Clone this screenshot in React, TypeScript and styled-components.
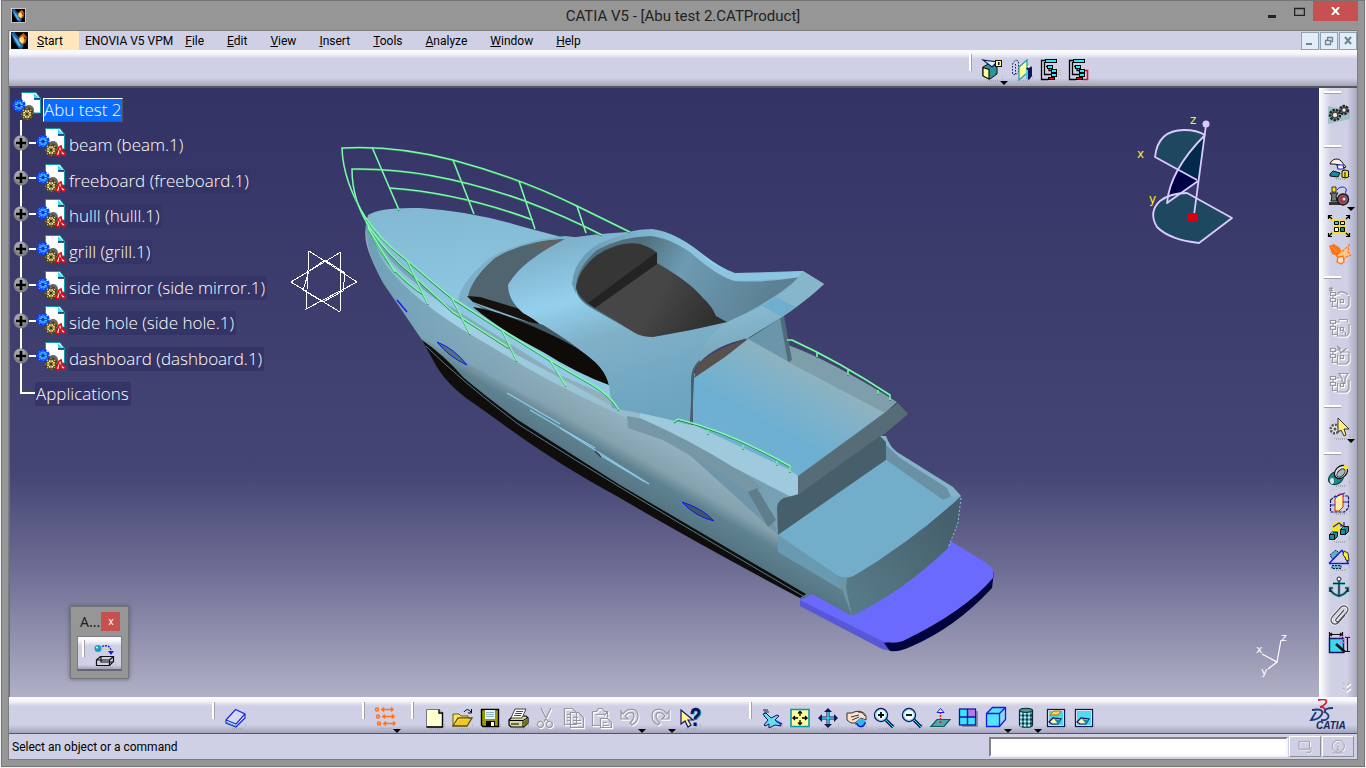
import React from 'react';
import styled, { createGlobalStyle, css } from 'styled-components';

const face = '#cfcfe5';
const frame = '#969696';
const uiFont = '"Noto Sans", sans-serif';
const menuFont = 'Roboto, "Noto Sans", sans-serif';

const GlobalStyle = createGlobalStyle`
  * { box-sizing: border-box; }
  html, body, #root { height: 100%; }
  body { margin: 0; background: #f2f2f4; font-family: ${uiFont}; font-size: 12px; color: #000; }
  button { font: inherit; color: inherit; border: 0; padding: 0; background: none; }
  ul { list-style: none; margin: 0; padding: 0; }
`;

const Window = styled.div`
  display: flex;
  flex-direction: column;
  height: calc(100vh - 1px);
  min-height: 700px;
  margin: 0 1px;
  padding: 0 6px 6px;
  border: 1px solid #757575;
  background: ${frame};
`;

const TitleBar = styled.header`
  display: grid;
  grid-template-columns: 1fr auto 1fr;
  height: 29px;
`;

const TitleIcon = styled.span`
  padding: 7px 0 0 3px;
  line-height: 0;
`;

const Title = styled.h1`
  margin: 0;
  font-family: Roboto, "Noto Sans", sans-serif;
  font-size: 15px;
  font-weight: 400;
  line-height: 30px;
  color: #222;
  white-space: pre;
`;

const Controls = styled.div`
  display: flex;
  justify-content: flex-end;
  align-items: flex-start;
`;

const ControlButton = styled.button<{ $close?: boolean }>`
  width: ${(p) => (p.$close ? 45 : 27)}px;
  height: 20px;
  line-height: 0;
  ${(p) => p.$close && css`background: #c75050;`}
`;

const Body = styled.div`
  flex: 1;
  display: flex;
  flex-direction: column;
  min-height: 0;
  border: 1px solid #7d7d80;
  background: ${face};
`;

const MenuBar = styled.nav`
  display: flex;
  height: 19px;
  padding-left: 1px;
`;

const MenuItem = styled.button<{ $kind?: 'start' | 'tight' }>`
  padding: 2px 12px 0 11px;
  font-family: ${menuFont};
  font-size: 12px;
  line-height: 17px;
  ${(p) => p.$kind === 'start' && css`padding: 2px 16px 0 8px; background: #ffe6bd;`}
  ${(p) => p.$kind === 'tight' && css`padding: 2px 1px 0 6px;`}
`;

const DocControls = styled.div`
  display: flex;
  gap: 1px;
  margin-left: auto;
`;

const DocButton = styled.button`
  width: 18px;
  height: 18px;
  margin-top: 1px;
  border: 1px solid #8fa3b5;
  background: #e2edf8;
  line-height: 0;
`;

const barFace = `linear-gradient(#fdfdff 0, #f4f4fa 4px, ${face} 9px, ${face} 28px, #a3a3b8 100%)`;

const Bar = styled.div<{ $top?: boolean }>`
  display: flex;
  align-items: flex-start;
  height: ${(p) => (p.$top ? 38 : 37)}px;
  padding-top: ${(p) => (p.$top ? 4 : 5)}px;
  border-bottom: ${(p) => (p.$top ? '2px' : '1px')} solid #55555a;
  background: ${barFace};
`;

const Group = styled.div<{ $vertical?: boolean; $before?: number; $after?: string }>`
  display: flex;
  align-items: flex-start;
  flex-direction: ${(p) => (p.$vertical ? 'column' : 'row')};
  ${(p) => p.$before !== undefined && (p.$vertical ? css`margin-top: ${p.$before}px;` : css`margin-left: ${p.$before}px;`)}
  ${(p) => p.$after && css`margin-left: auto; margin-right: ${p.$after};`}
`;

const Handle = styled.span<{ $vertical?: boolean }>`
  flex: none;
  width: ${(p) => (p.$vertical ? 17 : 3)}px;
  height: ${(p) => (p.$vertical ? 3 : 17)}px;
  margin: ${(p) => (p.$vertical ? '0 0 6px 4px' : '0 6px 0 0')};
  background: #fff;
  border: solid #a2a2a6;
  border-width: ${(p) => (p.$vertical ? '0 0 1px 0' : '0 1px 0 0')};
`;

const Tool = styled.button<{ $menu?: boolean; $vertical?: boolean }>`
  position: relative;
  width: 28px;
  height: 28px;
  line-height: 0;
  margin: ${(p) => (p.$vertical ? '0 0 0 5px' : '2px 0 0 0')};
  ${(p) => p.$menu && (p.$vertical ? css`margin-bottom: 2px;` : css`margin-right: 2px;`)}
  &::after {
    content: ${(p) => (p.$menu ? '""' : 'none')};
    position: absolute;
    right: -2px;
    bottom: -1px;
    border: solid transparent;
    border-width: 4px 4px 0;
    border-top-color: #000;
  }
`;

const Middle = styled.div`
  flex: 1;
  display: flex;
  min-height: 0;
`;

const Viewport = styled.main`
  flex: 1;
  display: grid;
  min-width: 0;
  border-left: 1px solid #6e6e72;
  border-right: 1px solid #fff;
  background: linear-gradient(#333366 0%, #3b3b6c 30%, #454575 63%, #6a6a92 78%, #b0b0c6 100%);
  & > * { grid-area: 1 / 1; min-height: 0; }
`;

const Scene = styled.svg`
  width: 100%;
  height: 100%;
  font-family: "DejaVu Sans", sans-serif;
`;

const Overlay = styled.div`
  display: flex;
  flex-direction: column;
  align-items: flex-start;
  justify-content: space-between;
  padding: 4px 0 18px;
  z-index: 1;
`;

const Tree = styled.ul`
  display: grid;
  grid-template-rows: repeat(9, 1fr);
  height: 320px;
  padding-left: 2px;
  background: linear-gradient(#fff, #fff) 10px 28px / 2px 274px no-repeat;
`;

const Node = styled.li`
  display: flex;
  align-items: center;
`;

const Toggle = styled.button`
  width: 16px;
  height: 16px;
  margin: 0 0 5px 1px;
  line-height: 0;
`;

const Stub = styled.span<{ $end?: boolean }>`
  width: ${(p) => (p.$end ? 14 : 7)}px;
  height: 2px;
  margin: ${(p) => (p.$end ? '0 0 3px 9px' : '0 0 5px 0')};
  background: #fff;
`;

const NodeIcon = styled.svg<{ $root?: boolean }>`
  width: 30px;
  height: 29px;
  margin: ${(p) => (p.$root ? '0 1px 6px 0' : '0 2px 5px 0')};
`;

const Label = styled.span<{ $selected?: boolean }>`
  padding: 0 2px 0 1px;
  border-radius: 2px;
  background: #343466;
  color: #fff;
  font-family: "Open Sans", "Noto Sans", sans-serif;
  font-weight: 300;
  font-size: 17px;
  line-height: 24px;
  white-space: pre;
  ${(p) => p.$selected && css`
    padding: 0;
    background: #0a6cff;
    border: 1px solid #fff;
    border-right-color: #555;
    border-bottom-color: #555;
    border-radius: 0;
    line-height: 22px;
  `}
`;

const Palette = styled.section`
  width: 59px;
  height: 73px;
  margin-left: 60px;
  padding: 5px 6px 6px;
  border: 1px solid #747478;
  background: ${frame};
  box-shadow: 0 0 4px rgba(30, 30, 60, 0.5);
`;

const PaletteHead = styled.div`
  display: flex;
  justify-content: space-between;
  height: 24px;
  padding: 0 2px 0 3px;
  font-size: 14px;
  line-height: 20px;
  color: #222;
`;

const PaletteClose = styled.button`
  width: 19px;
  height: 19px;
  background: #c75050;
  line-height: 0;
`;

const PaletteBody = styled.div`
  display: flex;
  height: 35px;
  padding: 3px 0 0 4px;
  border: 1px solid #7d7d80;
  border-bottom: 2px solid #66666c;
  background: ${barFace};
`;

const Side = styled.aside`
  display: flex;
  flex-direction: column;
  width: 37px;
  padding-top: 3px;
  background: linear-gradient(90deg, #fbfbfe 0, ${face} 11px, ${face} 27px, #a9a9bf 100%);
`;

const More = styled.button`
  align-self: flex-end;
  margin: auto 5px 3px 0;
  line-height: 0;
`;

const Brand = styled.svg`
  width: 48px;
  height: 32px;
  margin: -3px 0 0 auto;
  font-family: "Liberation Sans", sans-serif;
  font-weight: 700;
  font-style: italic;
`;

const StatusBar = styled.footer`
  display: flex;
  align-items: center;
  height: 25px;
  padding: 0 3px;
`;

const StatusText = styled.span`
  flex: 1;
  font-family: ${menuFont};
  font-size: 12px;
`;

const Command = styled.input`
  flex: 0 1 299px;
  height: 20px;
  border: 2px solid;
  border-color: #808086 #f4f4fa #f4f4fa #808086;
  background: #fff;
  outline: 0;
`;

const StatusButton = styled.button`
  width: 32px;
  height: 21px;
  margin-left: 1px;
  border: 1px solid;
  border-color: #fff #8e8e98 #8e8e98 #fff;
  line-height: 0;
`;

/* ---------- small drawings ---------- */

const Glyph = ({ children, size = 24 }: { children: React.ReactNode; size?: number }) => (
  <svg width={size} height={size} viewBox="0 0 24 24" fill="none" aria-hidden="true">
    {children}
  </svg>
);

const Shade = () => <path d="M7 22.500h13M9 23.500h10M22.500 18v4" stroke="#a9a9b4" strokeDasharray="1 1" />;

const Etched = ({ d }: { d: string }) => (
  <>
    <path d={d} stroke="#fff" strokeWidth="1.300" transform="translate(1 1)" />
    <path d={d} stroke="#97979f" strokeWidth="1.200" />
  </>
);

const Comet = ({ size }: { size: number }) => (
  <svg width={size} height={size} viewBox="0 0 18 18" aria-hidden="true">
    <rect width="18" height="18" fill="#000" />
    <path d="M1 2l3-1 5 6 4 7-2 3-3-1-4-6z" fill="#1c5ea8" />
    <path d="M2 3l5 5 4 7-3-1-3-5z" fill="#59b7f0" />
    <path d="M9 5l4-3 3 4-1 5-3 2-4-4z" fill="#c95a1c" />
    <path d="M9 7l3-2 2 3-2 4-3-2z" fill="#ffe46b" />
    <circle cx="14" cy="7" r="1" fill="#7a1010" />
    <rect x=".5" y=".5" width="17" height="17" fill="none" stroke="#eee" />
  </svg>
);

const servers = 'M3.5 5.500h5v3h-5zM3.500 11.500h5v3h-5zM6 8.500v3M5.500 14.500v5h5M8.500 7h4M10.500 12v9h9l2.500-3V9M13.500 12.500h3v3h-3z';

const tree = (
  <>
    <path d="M8 2.500H3.500v19H10M6.500 4v12.500H13M8 8.500h3v4h2" stroke="#000" strokeWidth="1.300" />
    <g fill="#2ce8ff" stroke="#000">
      <rect x="7.500" y="1.500" width="11" height="3" /><rect x="9.500" y="7.500" width="5" height="3" />
      <rect x="13.500" y="11.500" width="5" height="3" /><rect x="13.500" y="15.500" width="5" height="3" />
    </g>
    <rect x="10.500" y="19.500" width="6" height="2" fill="#e01010" stroke="#000" />
  </>
);

const icons: Record<string, React.ReactNode> = {
  book: (
    <>
      <path d="M3 14l9.500-10.500L22 8v4l-9 9-10-4z" fill="#f4faff" />
      <path d="M3 14l9.500-10.500L22 8l-9 10z" fill="#d6daf2" />
      <path d="M3 14l9.500-10.500L22 8v4l-9 9-10-4zM3 14l10 4 9-10" stroke="#1b2be0" strokeWidth="1.200" />
      <path d="M4 16.500l9 3.500 8-8" stroke="#2aa0b0" /><Shade />
    </>
  ),
  links: (
    <g stroke="#ff7416" strokeWidth="1.500">
      <circle cx="4" cy="3.500" r="1.500" /><path d="M8 3.500h12M11 1.500l-2 2 2 2M18 1.500l2 2-2 2" />
      <circle cx="5" cy="10.500" r="1.500" /><path d="M9 10.500h12M12 8.500l-2 2 2 2M19 8.500l2 2-2 2" />
      <circle cx="6" cy="17.500" r="1.500" /><path d="M10 17.500h12M13 15.500l-2 2 2 2M20 15.500l2 2-2 2" />
      <path d="M6 22.500h14" stroke="#aaa" strokeDasharray="1 1" />
    </g>
  ),
  page: (
    <>
      <path d="M4.500 3.500H17l3.500 3.500v14h-16z" fill="#ffffd2" stroke="#77777c" />
      <path d="M17 3.500V7h3.500v14h-16" stroke="#000" strokeWidth="1.400" /><Shade />
    </>
  ),
  folder: (
    <>
      <path d="M3 20V8h6l2 2h7v3" fill="#f7e86c" stroke="#6b5c00" />
      <path d="M3 20l5-8h14l-5 8z" fill="#efc72f" stroke="#5d5200" strokeWidth="1.300" />
      <path d="M5 18l4-5h10" stroke="#fff28c" strokeDasharray="1 1" />
      <path d="M14 6c2-3 5-3 7 0M21.500 3v4H18" stroke="#000" /><Shade />
    </>
  ),
  disk: (
    <>
      <path d="M3.500 3.500h17v17H5l-1.500-1.500z" fill="#9a9a00" stroke="#000" strokeWidth="1.400" />
      <rect x="7" y="4" width="10" height="9" fill="#e9f5f8" /><path d="M8 6.500h8M8 8.500h8M8 10.500h8" stroke="#8ab8c8" />
      <rect x="8" y="15" width="9" height="6" fill="#000" /><rect x="13" y="16" width="3" height="4" fill="#fff" /><Shade />
    </>
  ),
  printer: (
    <>
      <path d="M3 14l4-4h13l2 2v5l-4 4H5l-2-2z" fill="#dcd69a" stroke="#000" strokeWidth="1.200" />
      <path d="M9 3h11l-4 9H5z" fill="#fff" stroke="#444" /><path d="M10 5.500h7M9 7.500h7M8 9.500h7" stroke="#1248ff" strokeWidth="1.200" />
      <path d="M3 14.500h14l5-3M17 14.500V21M5 18h8" stroke="#000" /><path d="M18 15l4-3v5l-4 4z" fill="#75701f" /><Shade />
    </>
  ),
  cut: <Etched d="M7 2l7 14M17 2l-7 14M7 15.500a3 3 0 1 0 1 5.500 3 3 0 0 0-1-5.500zM16 15.500a3 3 0 1 0 1 5.500 3 3 0 0 0-1-5.500z" />,
  copy: <Etched d="M2.500 2.500h8l4 4v12h-12zM8.500 6.500h8l5 5v10h-13zM5 8.500h3M5 11.500h3M5 14.500h3M11 11.500h5M11 14.500h8M11 17.500h8" />,
  paste: <Etched d="M2.500 5.500h4l2-3h4l2 3h3v6M2.500 5.500v14h8M6 8.500h8M10.500 12.500h7l4 4v5h-11zM13 16.500h4M13 19.500h6M14 10l3-4 1 5" />,
  undo: <Etched d="M3 5v8h7l-3-3c4-5 9-4 9 0 0 3-2 5-4 7l2 2c4-2 6-5 6-9C20 2 10 1 5 8z" />,
  redo: <Etched d="M21 5v8h-7l3-3c-4-5-9-4-9 0 0 3 2 5 4 7l-2 2c-4-2-6-5-6-9C4 2 14 1 19 8z" />,
  help: (
    <>
      <path d="M3 4v14l4-3 3 6 3-2-3-5h5z" fill="#fff58a" stroke="#14146a" strokeWidth="1.200" />
      <path d="M15 8.500c0-6 7-6 7-1.500 0 4-4.500 3-4 7M18 17v3.500" stroke="#27b7c2" strokeWidth="3" />
      <path d="M14 8c0-6 7-6 7-1.500 0 4-4.500 3-4 7M17 16.500V20" stroke="#14145c" strokeWidth="3" /><Shade />
    </>
  ),
  plane: (
    <>
      <path d="M3 8l3-1 5 5 6-3 2 1-4 4 5 4 1 2-6-1-4 2-2 1v-4L5 20l-1-1 4-5-3-3z" fill="#66dff2" stroke="#14145c" />
      <path d="M3 4h5M4 6h5" stroke="#14145c" /><path d="M16 15l6 3" stroke="#1530e8" strokeWidth="1.500" /><Shade />
    </>
  ),
  fit: (
    <>
      <rect x="3" y="3.500" width="18" height="17" fill="#ffff9c" stroke="#0f98a5" strokeWidth="1.600" />
      <path d="M12 5v5M12 14v5M4.500 12H10M14 12h5.500M10 7.500l2-2 2 2M10 16.500l2 2 2-2M7 10l-2 2 2 2M17 10l2 2-2 2" stroke="#000" strokeWidth="1.300" />
    </>
  ),
  pan: (
    <>
      <path d="M12 2l4 4h-2.500v4.500H18V8l4 4-4 4v-2.500h-4.500V18H16l-4 4-4-4h2.500v-4.500H6V16l-4-4 4-4v2.500h4.500V6H8z" fill="#14145c" />
      <path d="M12 6v12M6 12h12" stroke="#35dcee" strokeWidth="1.600" /><Shade />
    </>
  ),
  rotate: (
    <>
      <path d="M3 7h5c5-3 12-2 14 3v4l-5-2-6 5H7l-4-3z" fill="#ffe0cc" stroke="#333" />
      <path d="M7 11l8-2M8 14l7-3M14 6c4 0 6 2 7 4M11 18h3" stroke="#333" />
      <circle cx="17" cy="17" r="4.500" fill="#2db5f5" /><path d="M12.500 17c2 5 7 5 9-1" stroke="#1518c0" strokeWidth="1.300" /><Shade />
    </>
  ),
  zoomIn: (
    <>
      <path d="M14 14l7 7" stroke="#14145c" strokeWidth="3.200" /><path d="M14 14l7 7" stroke="#2bd0e0" />
      <circle cx="9" cy="9" r="6.500" fill="#f5fdff" stroke="#14145c" strokeWidth="1.400" /><circle cx="9" cy="9" r="5.300" stroke="#5fe0f0" />
      <path d="M9 6v6M6 9h6" stroke="#000" strokeWidth="1.800" /><Shade />
    </>
  ),
  zoomOut: (
    <>
      <path d="M14 14l7 7" stroke="#14145c" strokeWidth="3.200" /><path d="M14 14l7 7" stroke="#2bd0e0" />
      <circle cx="9" cy="9" r="6.500" fill="#f5fdff" stroke="#14145c" strokeWidth="1.400" /><circle cx="9" cy="9" r="5.300" stroke="#5fe0f0" />
      <path d="M6 9h6" stroke="#000" strokeWidth="1.800" /><Shade />
    </>
  ),
  normal: (
    <>
      <path d="M3 20.500l6-7h13l-6 7z" fill="#49a9ae" stroke="#0e5a66" strokeWidth="1.200" />
      <path d="M12.500 17V6" stroke="#d01818" strokeWidth="1.400" strokeDasharray="2 1" /><path d="M9 6.500l3.500-4 3.500 4z" fill="#ffec9c" stroke="#1b1be0" />
      <path d="M4 22.500h12" stroke="#aaa" strokeDasharray="1 1" />
    </>
  ),
  views: (
    <>
      <rect x="6" y="5" width="16" height="16" fill="#8b8ba6" />
      <rect x="3.500" y="3" width="16" height="16" fill="#35e4ff" stroke="#14149a" strokeWidth="1.300" />
      <rect x="12" y="4" width="7" height="7" fill="#b37ae0" /><path d="M11.500 3v16M4 11h16" stroke="#14149a" strokeWidth="1.400" />
    </>
  ),
  cube: (
    <>
      <path d="M2.500 7.500l6-6h13v12l-6 7h-13z" fill="#53e2ff" /><path d="M15.500 7.500l6-6v12l-6 7z" fill="#8cd9f0" />
      <path d="M2.500 7.500l6-6h13v12l-6 7h-13zM2.500 7.500h13v13M15.500 7.500l6-6" stroke="#1a1ae0" strokeWidth="1.300" />
    </>
  ),
  cylinder: (
    <>
      <path d="M5.500 4.500c0-3 13-3 13 0V19c0 3-13 3-13 0z" fill="#3f9ca6" stroke="#14242c" strokeWidth="1.200" />
      <path d="M6 7.500h12M6 11.500h12M6 15.500h12M6 19.500h12" stroke="#c9eef0" strokeDasharray="2 2" strokeWidth="2" />
      <path d="M8 9.500h10M8 13.500h10M8 17.500h10" stroke="#10303a" strokeDasharray="2 2" strokeWidth="2" /><path d="M5.500 4.500c2 2.500 11 2.500 13 0" stroke="#14242c" />
    </>
  ),
  swap: (
    <>
      <rect x="3.500" y="3.500" width="17" height="17" fill="#fff" stroke="#14145c" strokeWidth="1.300" /><rect x="5" y="5" width="14" height="14" fill="#48d8ee" />
      <path d="M6 9l4-4h7l-3 4z" fill="#f7d95c" stroke="#9c7a10" /><path d="M5 16l4-4 8 1-3 5H8z" fill="#fff8b0" stroke="#14145c" strokeWidth="1.200" />
      <path d="M10 13l7 1-3 4z" fill="#1a8ca0" /><Shade />
    </>
  ),
  space: (
    <>
      <rect x="3.500" y="3.500" width="17" height="17" fill="#fff" stroke="#14145c" strokeWidth="1.300" /><rect x="5" y="5" width="14" height="14" fill="#4fdcf2" />
      <path d="M5 16l4-4 8 1-3 5H8z" fill="#fff8b0" stroke="#14145c" strokeWidth="1.200" /><path d="M10 13l7 1-3 4z" fill="#1a8ca0" /><Shade />
    </>
  ),
  cutBox: (
    <>
      <path d="M3 9l5-3 9 2v8l-7 5-7-3z" fill="#2f9298" stroke="#111" /><path d="M3 9.500l6 2V21l-6-3z" fill="#ffff98" stroke="#111" strokeWidth="1.200" />
      <path d="M3 2l14 2-5 5z" fill="#d6f8ff" stroke="#14145c" strokeWidth="1.200" /><rect x="15.500" y="2.500" width="6" height="6" fill="#ffff85" stroke="#111" />
      <rect x="18" y="4" width="1.500" height="3" fill="#111" /><Shade />
    </>
  ),
  mirror: (
    <>
      <path d="M2.500 6l3-4 3 1v11l-3 3-3-1zM5.500 6v10" stroke="#14145c" strokeDasharray="1.500 1.500" />
      <path d="M9 9l8-7v13l-8 7z" fill="#ffff92" stroke="#1f9aa8" strokeWidth="1.200" />
      <path d="M16 11l3-4 3 2v9l-3 4-3-2z" fill="#14145c" /><path d="M16 11l2 1v10l-2-2z" fill="#4ccdea" /><path d="M17 9l2-2 2 1-2 2z" fill="#fff" /><Shade />
    </>
  ),
  structure: <>{tree}<path d="M20.500 12v8M22.500 12v6" stroke="#b4b4be" strokeDasharray="1 1" /></>,
  structureLink: <>{tree}<path d="M19 12.500h2.500v9H17" stroke="#d81020" strokeWidth="1.600" /></>,
  gears: (
    <>
      <path d="M1 4l22 5v8L1 22z" fill="#8fbcc0" opacity=".8" />
      <circle cx="8" cy="13" r="5" fill="#8a8a8a" stroke="#222" strokeWidth="2.500" strokeDasharray="2.400 1" /><circle cx="17" cy="8" r="4" fill="#8a8a8a" stroke="#222" strokeWidth="2.500" strokeDasharray="2.400 1" />
      <circle cx="8" cy="13" r="3" stroke="#333" /><circle cx="8" cy="13" r="2" fill="#eee" /><circle cx="17" cy="8" r="2.500" stroke="#333" /><circle cx="17" cy="8" r="1.500" fill="#eee" />
    </>
  ),
  handMove: (
    <>
      <path d="M3 8c2-6 9-6 11-3l5 6-3 1-3-3-6-1z" fill="#fff2e2" stroke="#111" /><path d="M10 9h6l1 4h-6z" fill="#fff" stroke="#1a1ae0" strokeWidth="1.200" />
      <path d="M3 18l3-3 7 2-2 4-8-1z" fill="#188c96" stroke="#111" /><path d="M15 15l3-1 3.500 1v6l-3.500 1-3-1z" fill="#f5e41a" stroke="#111" /><path d="M18 16v6" stroke="#111" /><Shade />
    </>
  ),
  snap: (
    <>
      <path d="M10 6c3-5 11-3 9 1s3 3 2 6" stroke="#1a1ae0" /><path d="M5 3h4v5H5z" fill="#ffe21c" stroke="#333" />
      <path d="M3 9h8l-2 3 1 5H4l1-5z" fill="#777" stroke="#111" /><path d="M2 18h11v3H2z" fill="#333" />
      <circle cx="16" cy="15.500" r="5.500" fill="#6c6c74" stroke="#111" strokeWidth="1.300" /><circle cx="16" cy="15.500" r="3.500" fill="#a83040" /><circle cx="17" cy="15" r="1.500" fill="#bfeef5" />
    </>
  ),
  explode: (
    <>
      <path d="M2 2l20 20M22 2L2 22" stroke="#f3e11a" strokeWidth="2" /><path d="M1.500 5V1.500H5M19 1.500h3.500V5M1.500 19v3.500H5M19 22.500h3.500V19M2 2l3 3M22 2l-3 3M2 22l3-3M22 22l-3-3" stroke="#000" strokeWidth="1.200" />
      <path d="M6 6h13v13H6z" fill="#f3e11a" />
      <g stroke="#000"><path d="M7.500 7.500h4v3h-4z" fill="#23d7ee" /><path d="M13.500 7.500h4v3h-4z" fill="#fbd9d4" /><path d="M7.500 13.500h4v4h-4z" fill="#fff" /><path d="M13.500 13.500h4v4h-4z" fill="#188c96" /></g>
    </>
  ),
  clash: (
    <>
      <path d="M11 8l5 1 6-6-1 7 3 3-5 2-3 3-4-1-3-4z" fill="#ffc690" stroke="#ff7416" strokeWidth="1.200" strokeDasharray="3 1" />
      <path d="M2 4l5-2 6 4 1 4-4 4-5-2z" fill="#ff7416" /><path d="M11 15l5-1 1 6-3 2-4-2z" fill="#ffe0c0" stroke="#ff7416" strokeWidth="1.300" /><path d="M5 5l5 5" stroke="#ffb070" />
    </>
  ),
  srv1: <Etched d={servers + 'M4 0v5M2 1l4 3M6 1L2 4M11 6c3-2 8-1 10 2'} />,
  srv2: <Etched d={servers + 'M12 4.500h8l1 3M15 18c2-3 5 0 3 2M14 21h5'} />,
  srv3: <Etched d={servers + 'M11 4l3 6 6-5M13 9h8M10 3l4 3'} />,
  srv4: <Etched d={servers + 'M12 2.500h9l-3 5v5l-3-2V7.500z'} />,
  pick: (
    <>
      <circle cx="8" cy="13" r="4.200" fill="#eee" stroke="#555" strokeWidth="2.600" strokeDasharray="2 1.200" /><circle cx="8" cy="13" r="1.500" fill="#555" />
      <path d="M11 2v14l3-2 3 6 2-1-2-6h5z" fill="#fff07a" stroke="#333" /><Shade />
    </>
  ),
  coincide: (
    <>
      <ellipse cx="9" cy="15" rx="8" ry="6" fill="#188c84" stroke="#0d3c40" transform="rotate(-30 9 15)" />
      <ellipse cx="5" cy="18" rx="2" ry="3" fill="#d8e4e6" />
      <ellipse cx="14" cy="9" rx="7.500" ry="5.500" fill="#dfe7ea" stroke="#111" strokeWidth="1.300" transform="rotate(-45 14 9)" />
      <ellipse cx="14" cy="10" rx="5" ry="3" fill="#a9b9bc" stroke="#333" transform="rotate(-45 14 10)" /><rect x="17" y="2" width="4" height="4" fill="#ffe21c" /><Shade />
    </>
  ),
  contact: (
    <>
      <path d="M3.500 9l5-4h13v12l-4 4h-14z" fill="#cfcfe5" stroke="#14145c" strokeDasharray="3 1" strokeWidth="1.200" />
      <path d="M8 8l4-5h4v13l-4 4H8z" fill="#fff0a0" stroke="#d02020" /><path d="M3 14h5M16 11h5M8 6l10-4" stroke="#1a1ae0" /><Shade />
    </>
  ),
  offset: (
    <>
      <path d="M4 9c3-8 10-8 14-3l-4 3-3 4-5-1z" fill="#f7e51e" /><path d="M6 8l6-4 4 3M17 3v4h-4" stroke="#1a1ae0" strokeWidth="1.200" />
      <path d="M2.500 15.500l3-2.500h5v4.500l-3 3h-5zM13.500 10.500l3-3h5v5l-3 3h-5z" fill="#168c9c" stroke="#111" /><path d="M2.500 15.500h5v5M13.500 10.500h5v5" stroke="#111" /><path d="M4 14.500l2-1M15 9.500l2-1" stroke="#45d8ea" /><Shade />
    </>
  ),
  angle: (
    <>
      <path d="M3 8l6-5 3 3-6 7z" fill="#58b8c8" stroke="#14145c" strokeDasharray="2 1" /><path d="M2 16.500L15 3M2 16.500h20M15 3l6 13" stroke="#1a1ae0" strokeWidth="1.500" />
      <path d="M17 4l4 2 1 8-3-1-1-3-2-2z" fill="#fff01e" stroke="#333" /><path d="M5 18.500h9v3H5z" fill="#58b8c8" stroke="#14145c" strokeDasharray="2 1" /><Shade />
    </>
  ),
  anchor: (
    <>
      <path d="M12 5v16M6 8.500h12M3 13c1 6 6 7 9 8 3-1 8-2 9-8M3 17v-4h3M21 17v-4h-3" stroke="#3fa8aa" strokeWidth="2.600" />
      <path d="M12 5v16M6 8.500h12M3 13c1 6 6 7 9 8 3-1 8-2 9-8M3 17v-4h3M21 17v-4h-3" stroke="#14243c" strokeWidth="1.200" /><circle cx="12" cy="4" r="2" fill="#fff" stroke="#14243c" />
    </>
  ),
  clip: (
    <>
      <path d="M17 7l-8 9c-1 2 1 4 3 2l8-9c3-4-2-8-6-5l-9 10c-3 5 2 9 6 6l7-8" stroke="#fff" strokeWidth="2.600" />
      <path d="M17 7l-8 9c-1 2 1 4 3 2l8-9c3-4-2-8-6-5l-9 10c-3 5 2 9 6 6l7-8" stroke="#4b4b52" strokeWidth="1.200" />
    </>
  ),
  quick: (
    <>
      <path d="M2.500 1v6M3 3.500h12M15.500 1v6M5 2L3 3.500 5 5M13 2l2 1.500L13 5M20.500 7v13M18 6.500h5M18 20.500h5" stroke="#111" strokeWidth="1.200" />
      <rect x="2.500" y="7.500" width="14" height="14" fill="#3cd8f0" stroke="#14145c" strokeWidth="1.500" /><path d="M9 13l9 8" stroke="#111" strokeWidth="2.600" />
      <path d="M12 5.500h10M10 8.500h11M13 11.500h8" stroke="#e85ae0" strokeDasharray="1 2" strokeWidth="1.400" />
    </>
  ),
  catalog: (
    <>
      <circle cx="5" cy="4.500" r="3.500" fill="#1aa0b8" /><circle cx="4" cy="3.500" r="1" fill="#d0ffff" />
      <path d="M9 2.500c5-2 9 0 9 5" stroke="#1a1ae0" strokeWidth="1.300" strokeDasharray="2 1" /><path d="M10 4c4-1 7 0 7 4" stroke="#ffe21c" strokeDasharray="2 1" /><path d="M15 7h6l-3 4z" fill="#1a1ae0" />
      <path d="M3.500 16l4-3.500h13v5l-4 4h-13zM3.500 16h13v5.500M16.500 16l4-3.500M8 13v5h12" stroke="#111" strokeWidth="1.200" /><Shade />
    </>
  ),
};

type Item = [name: string, label: string, menu?: boolean];

const Tools = ({ items, vertical, before, after }: { items: Item[]; vertical?: boolean; before?: number; after?: string }) => (
  <Group role="toolbar" $vertical={vertical} $before={before} $after={after}>
    <Handle $vertical={vertical} />
    {items.map(([name, label, menu]) => (
      <Tool key={name} type="button" aria-label={label} $menu={menu} $vertical={vertical}>
        <Glyph>{icons[name]}</Glyph>
      </Tool>
    ))}
  </Group>
);

const Gear = ({ x, y, rim, core, hole }: { x: number; y: number; rim: string; core: string; hole: string }) => (
  <>
    <circle cx={x} cy={y} r="5.500" stroke={rim} fill={core} strokeWidth="2.500" strokeDasharray="3 1.300" />
    <circle cx={x} cy={y} r="4.500" fill={core} stroke={rim} />
    <path d={`M${x - 4} ${y}h8M${x} ${y - 4}v8M${x - 3} ${y - 3}l6 6M${x + 3} ${y - 3}l-6 6`} stroke={rim} strokeWidth=".800" />
    <circle cx={x} cy={y} r="1.500" fill={hole} />
  </>
);

const ProductIcon = ({ root }: { root?: boolean }) => (
  <NodeIcon $root={root} viewBox="0 0 30 29" aria-hidden="true">
    <path d="M9.500.500H24l4.500 6V21h-19z" fill="#fff" stroke="#0f9aa4" />
    <path d="M22 1l6 6h-6z" fill="#35dff0" />
    <path d="M22 7h6" stroke="#14145c" strokeWidth="1.500" />
    <circle cx="17" cy="18" r="5" fill="#66666a" />
    <Gear x={7} y={13.500} rim="#0a3cff" core="#48ccff" hole="#0a20b0" />
    <Gear x={15} y={22} rim="#4a4224" core="#ffe68a" hole="#3c3418" />
    {!root && <path d="M20 27l3-8 2-1 1 5 3 2v2h-3l-2-4-1 5z" fill="#fff" stroke="#e00c14" strokeWidth="1.700" />}
  </NodeIcon>
);

const parts = ['beam', 'freeboard', 'hulll', 'grill', 'side mirror', 'side hole', 'dashboard'];

const menus: [string, ('start' | 'tight')?][] = [
  ['Start', 'start'], ['ENOVIA V5 VPM', 'tight'], ['File'], ['Edit'], ['View'], ['Insert'], ['Tools'], ['Analyze'], ['Window'], ['Help'],
];

/* ---------- 3D scene ---------- */

const Rail = ({ d }: { d: string }) => (
  <g fill="none">
    <path d={d} stroke="#1f7a44" strokeWidth="1.200" transform="translate(0 1)" />
    <path d={d} stroke="#80f8ae" strokeWidth="1.500" />
  </g>
);

const Yacht = () => (
  <g>
    <defs>
      <linearGradient id="hull" gradientUnits="userSpaceOnUse" x1="640" y1="425" x2="601" y2="494">
        <stop offset="0" stopColor="#93b2c0" /><stop offset=".36" stopColor="#84a1ae" /><stop offset=".52" stopColor="#5f8291" /><stop offset="1" stopColor="#4d6c7a" />
      </linearGradient>
      <linearGradient id="hullBow" x1="0" y1="0" x2="1" y2="0">
        <stop offset="0" stopColor="#6fa0b8" /><stop offset=".3" stopColor="#7aa6bb" stopOpacity=".8" /><stop offset="1" stopColor="#8fa8b2" stopOpacity="0" />
      </linearGradient>
      <linearGradient id="deckFore" gradientUnits="userSpaceOnUse" x1="430" y1="205" x2="440" y2="330">
        <stop offset="0" stopColor="#82b8d2" /><stop offset="1" stopColor="#92cae5" />
      </linearGradient>
      <linearGradient id="gunwale" gradientUnits="userSpaceOnUse" x1="370" y1="230" x2="680" y2="450">
        <stop offset="0" stopColor="#7fb2ca" /><stop offset=".3" stopColor="#a2d2e8" /><stop offset=".7" stopColor="#9ac4d6" /><stop offset="1" stopColor="#8db2c0" />
      </linearGradient>
      <linearGradient id="shell" gradientUnits="userSpaceOnUse" x1="570" y1="238" x2="620" y2="420">
        <stop offset="0" stopColor="#7db0ca" /><stop offset=".32" stopColor="#94d0ed" /><stop offset=".55" stopColor="#7fb0c8" /><stop offset="1" stopColor="#6da4c0" />
      </linearGradient>
      <linearGradient id="rim" x1="0" y1="0" x2="1" y2="0">
        <stop offset="0" stopColor="#6798b0" /><stop offset=".5" stopColor="#8cc4de" /><stop offset="1" stopColor="#8ac6e4" />
      </linearGradient>
      <linearGradient id="well" gradientUnits="userSpaceOnUse" x1="640" y1="245" x2="760" y2="310">
        <stop offset="0" stopColor="#50707f" /><stop offset=".35" stopColor="#6d9bb2" /><stop offset="1" stopColor="#5c8194" />
      </linearGradient>
      <linearGradient id="floor" gradientUnits="userSpaceOnUse" x1="650" y1="310" x2="700" y2="340">
        <stop offset="0" stopColor="#464646" /><stop offset="1" stopColor="#303030" />
      </linearGradient>
      <linearGradient id="aft" gradientUnits="userSpaceOnUse" x1="830" y1="380" x2="780" y2="470">
        <stop offset="0" stopColor="#90b2be" /><stop offset=".3" stopColor="#7fb2ca" /><stop offset=".7" stopColor="#6cafd2" /><stop offset="1" stopColor="#70b0d2" />
      </linearGradient>
      <linearGradient id="transom" gradientUnits="userSpaceOnUse" x1="850" y1="590" x2="950" y2="520">
        <stop offset="0" stopColor="#567a86" /><stop offset="1" stopColor="#45606c" />
      </linearGradient>
      <linearGradient id="under" gradientUnits="userSpaceOnUse" x1="750" y1="300" x2="760" y2="350">
        <stop offset="0" stopColor="#8cc2dc" /><stop offset="1" stopColor="#7ba6b8" />
      </linearGradient>
    </defs>

    {/* swim platform */}
    <path d="M800 598L800 606 880 648Q888 652 903 650L903 640 820 592z" fill="#5858d6" />
    <path d="M890 651Q900 652 910 647Q955 628 992 588L994 572 900 640 884 643z" fill="#02023c" />
    <path d="M810 593L852 600 930 540 952 542 985 562Q996 569 993 578Q965 611 903 641Q892 645 880 640L800 600z" fill="#6a6aff" />

    {/* hull side */}
    <path d="M628 405L700 430 800 490 880 450 900 520 852 616 700 520z" fill="#6f96a8" />
    <path d="M368 215Q363 232 367 246Q373 268 390 291L422 340Q438 370 473 403L497 420Q560 465 620 498L803 599 812 594 852 616 842 578 778 535 640 410 400 260z" fill="url(#hull)" />
    <path d="M366 225Q365 250 383 283L420 337 463 361 530 398 640 420 400 260z" fill="url(#hullBow)" />
    <path d="M422 340Q445 356 463 377Q485 396 518 420L620 485 806 594 800 598Q700 545 620 498Q555 463 497 420L473 403Q445 384 433 360z" fill="#100e0c" />
    <path d="M426 346Q460 380 518 424Q620 489 803 596" fill="none" stroke="#587c8c" strokeWidth="1" />

    {/* fore deck and gunwale */}
    <path d="M368 215Q380 207 420 208Q470 211 520 226L565 238 600 300 640 410 560 375 440 300 372 235z" fill="url(#deckFore)" />
    <path d="M368 226Q380 250 400 270Q440 306 517 355L620 410 700 425 796 490 796 498Q740 470 700 448L640 424Q560 388 517 362L463 330Q400 290 380 256z" fill="url(#gunwale)" />
    <path d="M640 412Q680 428 720 450L793 485 800 505 778 534 770 516Q758 494 733 478Q690 450 640 424z" fill="#76a0b4" />
    <path d="M627 416Q665 422 704 447Q735 463 750 478L762 488 748 494Q735 482 715 470L663 440 628 428z" fill="#7597a6" />

    {/* cabin windscreen */}
    <path d="M458 300Q462 280 490 258Q520 240 565 236L600 240 560 300 520 340z" fill="#7db0c8" />
    <path d="M468 296Q472 278 495 258Q525 240 565 239L548 250 523 267 509 283 512 300 535 320z" fill="#50656f" />
    <path d="M530 247Q545 240 565 239L547 251z" fill="#5f6264" />
    <path d="M467 296L480 297 520 309 545 328 515 317 473 302z" fill="#15110c" />
    <path d="M473 303Q510 320 545 325L590 350 560 350z" fill="#405660" />
    <path d="M473 307Q500 311 543 331Q590 352 601 368Q607 376 609 385Q578 374 543 352Q500 330 473 307z" fill="#0f0b08" />

    {/* upper aft deck */}
    <path d="M692 428L694 374 748 338 790 362 886 412 798 478z" fill="url(#aft)" />
    <path d="M788 345Q830 360 897 402L885 413 788 362z" fill="#7f9eac" />
    <path d="M898 403L908 414 882 436 798 497 798 476z" fill="#566d77" />
    <path d="M640 412L673 419 692 424 790 470 798 476V495L793 498 733 467Q690 440 640 418z" fill="#9fc9dc" />

    {/* stern well */}
    <path d="M880 436L886 436Q890 447 897 452L953 487 961 496 957 508 886 470z" fill="#84b3ca" />
    <path d="M799 494L880 436 886 442V460L778 535 777 508Q778 498 788 497z" fill="#475f6b" />
    <path d="M886 445L900 458 947 488 951 497 943 500 886 460z" fill="#6990a3" />
    <path d="M886 460L943 500 950 497 961 496Q920 535 857 574Q848 580 838 576L778 535z" fill="#72adca" />
    <path d="M778 535L838 576 842 590 778 552z" fill="#6a9ab2" />
    <path d="M748 492L757 488 776 520 768 527z" fill="#5f7d8b" />
    <path d="M838 577Q848 580 857 574Q915 540 961 496L958 523 948 548Q905 590 852 616Q848 595 838 577z" fill="url(#transom)" />
    <path d="M838 577Q844 596 852 616L846 588 847 578z" fill="#6e95a6" />
    <path d="M961 498L958 523 948 548" fill="none" stroke="#8cc4da" strokeDasharray="2 2" />

    {/* flybridge */}
    <path d="M782 317L789 362 748 339z" fill="#6b96aa" />
    <path d="M780 318L784 316 792 360 788 362z" fill="#4f6d7a" />
    <path d="M565 239Q590 234 628 232Q640 229 652 229Q675 232 700 252Q720 268 735 273L803 271 824 284Q800 306 782 317L748 338Q716 345 700 362Q692 370 692 380L690 425Q650 414 612 408L609 385Q606 372 595 362Q570 340 523 313Q508 300 508 285Q520 262 565 239z" fill="url(#shell)" />
    <path d="M730 320Q760 309 777 297L795 307 782 317 748 338Q716 345 700 360Q705 335 730 320z" fill="url(#under)" opacity=".8" />
    <path d="M748 339Q716 348 698 364L694 378 725 357z" fill="#56504e" />
    <path d="M692 425V380Q692 368 700 361" fill="none" stroke="#48606c" strokeWidth="2" />
    <path d="M572 284Q574 258 600 243Q625 232 650 230Q675 232 700 254Q722 273 735 275L803 271 800 278 735 281Q715 274 690 252 670 237 650 237Q615 240 595 258 575 274 576 294z" fill="url(#rim)" />
    <path d="M576 288Q576 268 597 250Q620 237 650 236Q667 237 690 252Q718 277 735 281Q765 283 800 277Q770 303 727 322Q690 331 653 337Q642 337 635 333L595 310Q576 300 576 288z" fill="url(#well)" />
    <path d="M576 288Q578 270 597 255Q620 240 640 244Q655 249 657 254V263L593 307Q579 299 576 288z" fill="#363636" />
    <path d="M593 307L657 263Q690 282 703 298Q712 306 716 316L727 322Q690 331 653 337Q642 337 635 333z" fill="url(#floor)" />
    <path d="M657 252V264L595 308 588 303z" fill="#232323" />
    <path d="M803 271L824 284Q812 296 795 307L777 297Q792 286 803 271z" fill="#86b6ca" />
    <path d="M777 297L795 307 782 317 762 306z" fill="#70aecf" />

    {/* hull trim */}
    <path d="M507 393L560 424M530 410L595 448M560 428L649 484M600 455L645 482" fill="none" stroke="#8cc8e6" strokeWidth="1.300" />
    <path d="M595 451l6 6" stroke="#334" strokeWidth="1.300" />
    <path d="M437 342Q455 349 467 365Q449 357 437 342z" fill="#4f7384" stroke="#1414e8" />
    <path d="M682 502Q702 508 714 521Q694 516 682 502z" fill="#3c5866" stroke="#1414e8" />
    <path d="M397 300L407 312" stroke="#1414e8" strokeWidth="1.300" />

    {/* railings */}
    <Rail d="M367 220Q343 182 342 148Q395 145 453 160Q520 178 577 206L630 232" />
    <Rail d="M369 226Q352 200 352 169Q430 167 525 201Q565 216 602 235" />
    <Rail d="M390 188Q460 193 533 220" />
    <Rail d="M372 147L399 210M453 160L474 214M519 181L535 229M577 206L586 233" />
    <Rail d="M366 218Q380 240 407 260 430 280 452 298L502 330 550 360 593 385Q612 397 619 410" />
    <Rail d="M366 222Q385 252 413 275L453 312 508 347" />
    <Rail d="M368 226Q376 248 395 270Q410 286 425 295" />
    <Rail d="M368 228L395 272M407 260L428 304M452 298L470 334M502 330L517 361M550 360L566 386" />
    <Rail d="M787 340L792 340Q840 362 890 395V400M817 352v5M848 370v5M878 390v4" />
    <Rail d="M674 422L678 419Q730 432 790 466V472M708 430v4M743 445v4M777 461v4" />
  </g>
);

const SceneDrawing = () => (
  <Scene viewBox="10 88 1309 609" preserveAspectRatio="xMidYMid meet" role="img" aria-label="Yacht assembly">
    <Yacht />
    <g fill="none" stroke="#fff" strokeWidth="1" shapeRendering="crispEdges">
      <path d="M291 282L341 252 340 312z" />
      <path d="M357 282L309 251 306 309z" />
      <path d="M325 260L345 273 343 291 323 302 303 290 309 271z" />
    </g>
    <g stroke="#dccbff" strokeWidth="1.800" strokeLinejoin="round">
      <path d="M1155 157Q1158 130 1184 130Q1197 130 1205 135L1197 180z" fill="#1d4860" stroke="none" />
      <path d="M1205 135Q1188 150 1178 170L1198 181z" fill="#00294a" stroke="none" />
      <path d="M1178 170L1198 181 1167 203Q1169 187 1178 170z" fill="#000046" stroke="none" />
      <path d="M1187 193L1232 218 1199 243Q1170 240 1157 227Q1148 212 1160 201Q1170 193 1187 193z" fill="#1d4860" />
      <path d="M1197 180L1155 157Q1158 130 1184 130Q1197 130 1205 135Q1170 170 1167 203L1198 181M1206 125L1194 215" fill="none" />
    </g>
    <circle cx="1206" cy="124" r="3.500" fill="#dccbff" />
    <rect x="1188" y="213" width="9" height="9" fill="#d80010" />
    <g fill="#ffee20" fontSize="12"><text x="1190" y="124">z</text><text x="1137" y="158">x</text><text x="1149" y="203">y</text></g>
    <path d="M1281 640L1277 662 1262 654M1277 662L1268 669" fill="none" stroke="#fff" strokeWidth="1.200" />
    <g fill="#fff" fontSize="11"><text x="1281" y="641">z</text><text x="1256" y="653">x</text><text x="1261" y="675">y</text></g>
  </Scene>
);

export default function App() {
  return (
    <>
      <GlobalStyle />
      <Window>
        <TitleBar>
          <TitleIcon><Comet size={15} /></TitleIcon>
          <Title>CATIA V5 - [Abu test 2.CATProduct]</Title>
          <Controls>
            <ControlButton type="button" aria-label="Minimize">
              <svg width="9" height="14"><path d="M0 12.500h8" stroke="#222" strokeWidth="3" /></svg>
            </ControlButton>
            <ControlButton type="button" aria-label="Maximize">
              <svg width="11" height="9"><path d="M.5 1.500h10v7H.5z" fill="none" stroke="#222" strokeWidth="1.500" /></svg>
            </ControlButton>
            <ControlButton type="button" aria-label="Close" $close>
              <svg width="9" height="8"><path d="M1 0l7 8M8 0L1 8" stroke="#fff" strokeWidth="2" /></svg>
            </ControlButton>
          </Controls>
        </TitleBar>
        <Body>
          <MenuBar>
            <Comet size={19} />
            {menus.map(([name, kind]) => (
              <MenuItem key={name} type="button" $kind={kind}>
                {kind === 'tight' ? name : <><u>{name[0]}</u>{name.slice(1)}</>}
              </MenuItem>
            ))}
            <DocControls>
              <DocButton type="button" aria-label="Minimize document">
                <svg width="10" height="10"><path d="M1 8h6" stroke="#6d8596" strokeWidth="2" /></svg>
              </DocButton>
              <DocButton type="button" aria-label="Restore document">
                <svg width="10" height="10"><path d="M3.500 4V1.500h5v4H6M1.500 4.500h5v4h-5z" fill="none" stroke="#6d8596" strokeWidth="1.300" /></svg>
              </DocButton>
              <DocButton type="button" aria-label="Close document">
                <svg width="10" height="10"><path d="M2 1l6 7M8 1L2 8" stroke="#6d8596" strokeWidth="2" /></svg>
              </DocButton>
            </DocControls>
          </MenuBar>
          <Bar $top>
            <Tools after="265px" items={[['cutBox', 'Reuse pattern', true], ['mirror', 'Symmetry'], ['structure', 'Product structure'], ['structureLink', 'Linked structure']]} />
          </Bar>
          <Middle>
            <Viewport>
              <SceneDrawing />
              <Overlay>
                <Tree>
                  <Node><ProductIcon root /><Label $selected>Abu test 2</Label></Node>
                  {parts.map((part) => (
                    <Node key={part}>
                      <Toggle type="button" aria-label={`Expand ${part}`}>
                        <svg width="16" height="16"><circle cx="8" cy="8" r="7.500" fill="#808084" /><circle cx="7" cy="6" r="5.500" fill="#a4a4a8" /><path d="M8 3v10M3 8h10" stroke="#000" strokeWidth="2.600" /></svg>
                      </Toggle>
                      <Stub />
                      <ProductIcon />
                      <Label>{`${part} (${part}.1)`}</Label>
                    </Node>
                  ))}
                  <Node><Stub $end /><Label>Applications</Label></Node>
                </Tree>
                <Palette aria-label="Assembly palette">
                  <PaletteHead>
                    <span>A...</span>
                    <PaletteClose type="button" aria-label="Close palette">
                      <svg width="6" height="6"><path d="M1 0l4 6M5 0L1 6" stroke="#f0d8d8" strokeWidth="1.300" /></svg>
                    </PaletteClose>
                  </PaletteHead>
                  <PaletteBody><Tools items={[['catalog', 'Catalog browser']]} /></PaletteBody>
                </Palette>
              </Overlay>
            </Viewport>
            <Side>
              <Tools vertical items={[['gears', 'Update']]} />
              <Tools vertical before={17} items={[['handMove', 'Manipulate'], ['snap', 'Snap', true], ['explode', 'Explode'], ['clash', 'Stop on clash']]} />
              <Tools vertical before={8} items={[['srv1', 'Connect'], ['srv2', 'Synchronize'], ['srv3', 'Load'], ['srv4', 'Filter']]} />
              <Tools vertical before={8} items={[['pick', 'Select', true]]} />
              <Tools vertical before={8} items={[['coincide', 'Coincidence'], ['contact', 'Contact'], ['offset', 'Offset'], ['angle', 'Angle'], ['anchor', 'Fix component'], ['clip', 'Fix together'], ['quick', 'Quick constraint']]} />
              <More type="button" aria-label="More tools">
                <svg width="9" height="11"><path d="M1 1l3.500 3L8 1M1 6l3.500 3L8 6" fill="none" stroke="#fff" strokeWidth="1.500" /><path d="M0 0l3.500 3L7 0M0 5l3.500 3L7 5" fill="none" stroke="#aaaab2" /></svg>
              </More>
            </Side>
          </Middle>
          <Bar>
            <Tools before={203} items={[['book', 'Catalog']]} />
            <Tools before={113} items={[['links', 'Constraints', true]]} />
            <Tools before={10} items={[['page', 'New'], ['folder', 'Open'], ['disk', 'Save'], ['printer', 'Print'], ['cut', 'Cut'], ['copy', 'Copy'], ['paste', 'Paste'], ['undo', 'Undo', true], ['redo', 'Redo', true], ['help', "What's this?"]]} />
            <Tools before={45} items={[['plane', 'Fly mode'], ['fit', 'Fit all in'], ['pan', 'Pan'], ['rotate', 'Rotate'], ['zoomIn', 'Zoom in'], ['zoomOut', 'Zoom out'], ['normal', 'Normal view'], ['views', 'Multi-view'], ['cube', 'Isometric view', true], ['cylinder', 'Shading', true], ['swap', 'Hide/Show'], ['space', 'Swap visible space']]} />
            <Brand viewBox="0 0 48 32" role="img" aria-label="CATIA">
              <path d="M9 1Q19-1 17 4Q15 7 11 8Q18 8 15 14" fill="none" stroke="#d8202c" strokeWidth="1.800" />
              <path d="M3 11Q15 9 13 15Q10 21 2 21L7 13" fill="none" stroke="#1c3c80" strokeWidth="1.800" />
              <path d="M24 9Q15 9 16 13Q21 16 19 19Q17 22 12 21" fill="none" stroke="#1c3c80" strokeWidth="1.800" />
              <text x="7" y="30" fontSize="10" fill="#14285c">CATIA</text>
            </Brand>
          </Bar>
          <StatusBar>
            <StatusText>Select an object or a command</StatusText>
            <Command type="text" aria-label="Command" />
            <StatusButton type="button" aria-label="Dialog"><Glyph size={18}><Etched d="M4 5h14v10H4zM14 19h6v-7" /></Glyph></StatusButton>
            <StatusButton type="button" aria-label="Information"><Glyph size={18}><Etched d="M12 3a8 8 0 1 0 1 0zM12 7v1M12 10v6M10 16h5M5 20h14" /></Glyph></StatusButton>
          </StatusBar>
        </Body>
      </Window>
    </>
  );
}
